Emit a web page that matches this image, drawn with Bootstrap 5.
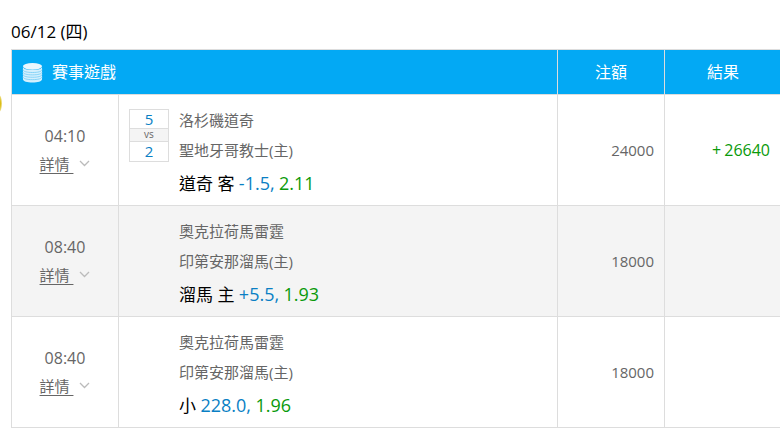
<!DOCTYPE html>
<html lang="zh-Hant">
<head>
<meta charset="utf-8">
<link href="https://cdn.jsdelivr.net/npm/bootstrap@5.3.0/dist/css/bootstrap.min.css" rel="stylesheet">
<style>
html,body{width:780px;height:430px;overflow:hidden;background:#fff;}
body{font-family:"Open Sans","Noto Sans CJK TC",sans-serif;color:#666;position:relative;}
.page-wrap{padding:20px 0 0 11px;width:780px;}
.day-title{font-size:17px;line-height:24px;color:#000;margin:0 0 5px;height:24px;}
.bet-table{width:770px;table-layout:fixed;border-collapse:collapse;margin:0;}
.bet-table th,.bet-table td{border:1px solid #ddd;padding:0;vertical-align:middle;}
.bet-table thead th{background:#03a9f4;color:#fff;font-weight:400;font-size:16px;height:45px;text-align:center;border-color:#ddd;}
.bet-table tbody tr{height:111px;}
.bet-table tbody tr.alt td{background:#f4f4f4;}
.head-game{display:flex;align-items:center;gap:9px;padding-left:10px;}
.w-time{width:107px;}.w-match{width:439px;}.w-stake{width:107px;}.w-result{width:117px;}
.time-cell{text-align:center;font-size:16px;color:#666;line-height:24px;}
.time-val{margin-top:-3px;margin-bottom:4px;}
.detail-row{font-size:15px;line-height:20px;display:flex;justify-content:center;align-items:center;gap:6px;padding-top:2px;}
.detail-link{color:#666;text-decoration:underline;text-underline-offset:3px;}
.match-cell{display:flex;padding-left:10px;padding-top:6px;}
.score-box{width:40px;height:53px;border:1px solid #ddd;text-align:center;color:#0a7fc4;font-size:15px;margin-top:4px;margin-right:10px;display:flex;flex-direction:column;background:#fff;flex:none;}
.score-num{flex:1;line-height:18px;}
.score-vs{height:12px;line-height:10px;font-size:10px;color:#666;background:#f4f4f4;border-top:1px solid #ddd;border-bottom:1px solid #ddd;box-sizing:content-box;}
.team-name{font-size:15px;line-height:30px;color:#666;white-space:nowrap;}
.pick-line{font-size:17px;line-height:36px;color:#000;white-space:nowrap;}
.pick-line .odd-line{color:#0a7fc4;font-size:18px;}
.pick-line .odd-val{color:#0a9a0a;font-size:18px;}
.stake-cell{text-align:right;padding-right:10px !important;font-size:15px;color:#666;}
.result-cell{text-align:right;font-size:16px;color:#0a9a0a;padding-right:11px !important;}
.plus-sign{margin-right:3px;}
.side-dot{position:absolute;left:-4px;top:95px;width:6px;height:17px;border-radius:50%;background:radial-gradient(#d8b800 30%,#fff 100%);}
</style>
</head>
<body>
<div class="side-dot"></div>
<div class="page-wrap">
<div class="day-title">06/12 (四)</div>
<table class="bet-table">
<colgroup><col class="w-time"><col class="w-match"><col class="w-stake"><col class="w-result"></colgroup>
<thead><tr>
<th colspan="2"><div class="head-game">
<svg width="21" height="21" viewBox="0 0 22 22"><ellipse cx="11" cy="4.500" rx="10" ry="3.500" fill="#eaf7fe"/><path d="M1 5v13c0 2 4.500 3.500 10 3.500s10-1.500 10-3.500V5c0 2-4.500 3.500-10 3.500S1 7 1 5z" fill="#d5f0fd"/><g fill="none" stroke="#6fcaf6" stroke-width=".8"><path d="M1 8c0 2 4.500 3 10 3s10-1 10-3"/><path d="M1 10.500c0 2 4.500 3 10 3s10-1 10-3"/><path d="M1 13c0 2 4.500 3 10 3s10-1 10-3"/><path d="M1 15.500c0 2 4.500 3 10 3s10-1 10-3"/></g></svg>
<span>賽事遊戲</span></div></th>
<th>注額</th><th>結果</th>
</tr></thead>
<tbody>
<tr>
<td class="time-cell"><div class="time-val">04:10</div><div class="detail-row"><span class="detail-link">詳情&nbsp;</span><svg width="11" height="7" viewBox="0 0 11 7"><path d="M1 1l4.500 4.500L10 1" fill="none" stroke="#bbb" stroke-width="1.300"/></svg></div></td>
<td><div class="match-cell"><div class="score-box"><div class="score-num">5</div><div class="score-vs">vs</div><div class="score-num">2</div></div><div><div class="team-name">洛杉磯道奇</div><div class="team-name">聖地牙哥教士(主)</div><div class="pick-line">道奇 客 <span class="odd-line">-1.5,</span> <span class="odd-val">2.11</span></div></div></div></td>
<td class="stake-cell">24000</td>
<td class="result-cell"><span class="plus-sign">+</span>26640</td>
</tr>
<tr class="alt">
<td class="time-cell"><div class="time-val">08:40</div><div class="detail-row"><span class="detail-link">詳情&nbsp;</span><svg width="11" height="7" viewBox="0 0 11 7"><path d="M1 1l4.500 4.500L10 1" fill="none" stroke="#bbb" stroke-width="1.300"/></svg></div></td>
<td><div class="match-cell"><div class="score-box invisible"></div><div><div class="team-name">奧克拉荷馬雷霆</div><div class="team-name">印第安那溜馬(主)</div><div class="pick-line">溜馬 主 <span class="odd-line">+5.5,</span> <span class="odd-val">1.93</span></div></div></div></td>
<td class="stake-cell">18000</td>
<td class="result-cell"></td>
</tr>
<tr>
<td class="time-cell"><div class="time-val">08:40</div><div class="detail-row"><span class="detail-link">詳情&nbsp;</span><svg width="11" height="7" viewBox="0 0 11 7"><path d="M1 1l4.500 4.500L10 1" fill="none" stroke="#bbb" stroke-width="1.300"/></svg></div></td>
<td><div class="match-cell"><div class="score-box invisible"></div><div><div class="team-name">奧克拉荷馬雷霆</div><div class="team-name">印第安那溜馬(主)</div><div class="pick-line">小 <span class="odd-line">228.0,</span> <span class="odd-val">1.96</span></div></div></div></td>
<td class="stake-cell">18000</td>
<td class="result-cell"></td>
</tr>
</tbody>
</table>
</div>
<script src="https://cdn.jsdelivr.net/npm/bootstrap@5.3.0/dist/js/bootstrap.bundle.min.js"></script>
</body>
</html>
